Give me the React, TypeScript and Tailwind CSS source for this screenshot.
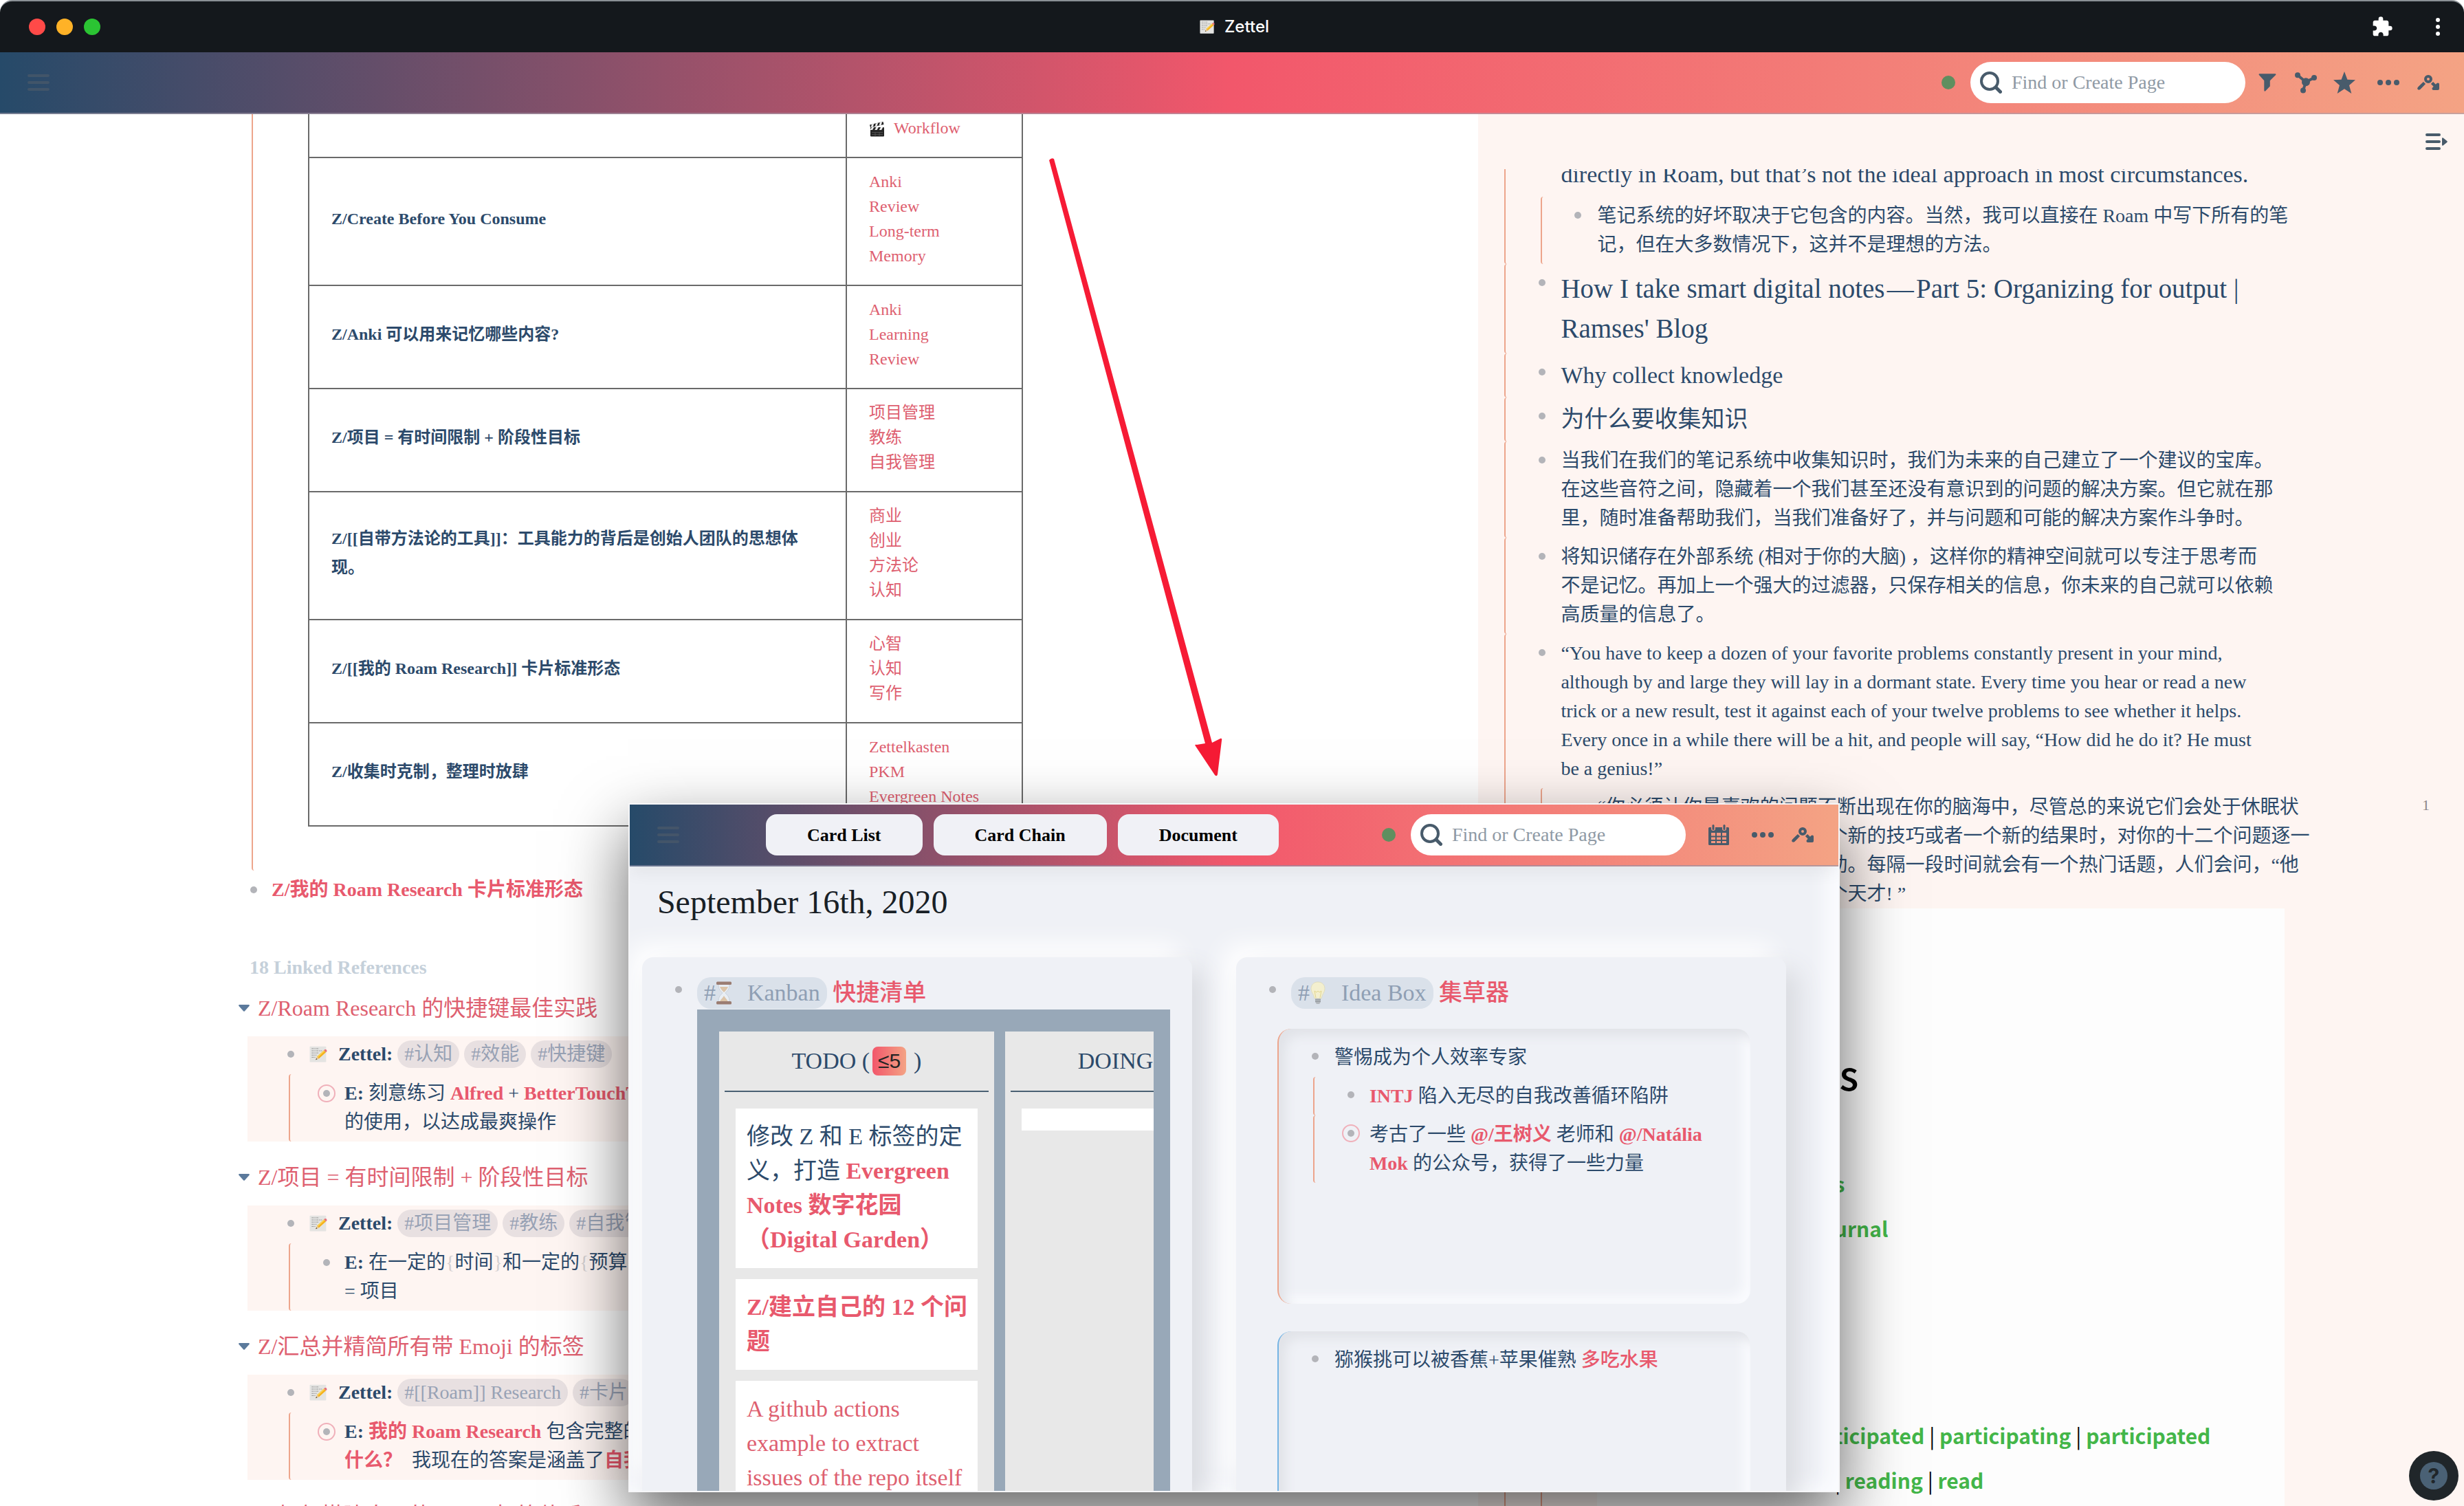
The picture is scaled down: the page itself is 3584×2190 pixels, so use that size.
import React from "react";

const SERIF = "font-['Liberation_Serif','Noto_Sans_CJK_SC',serif]";
const BAR = "bg-[linear-gradient(90deg,#264a69,#f2576b_50%,#f4a384)]";

/* ---------- icons ---------- */

function Memo({ className = "size-6" }: { className?: string }) {
  return (
    <svg viewBox="0 0 24 24" className={`inline-block shrink-0 ${className}`} aria-hidden="true">
      <rect x="0.5" y="1.5" width="22" height="21" rx="0.8" fill="#e4e4e2" />
      <g stroke="#9a9a9a" strokeWidth="0.9" strokeDasharray="3 0.8 1.6 0.7">
        <path d="M3 4.5h10M3 7.4h14M3 10.3h10M3 13.2h7M3 16.1h5" />
      </g>
      <path d="M8.5 19.5l2-4.4L19.6 6.700l2.600 2.800-9.200 8.300z" fill="#f5b21b" />
      <path d="M10.500 15.100L19.600 6.700l1 1.100-9.100 8.400z" fill="#fbd457" />
      <path d="M19.600 6.700l1.200-1.100c1.700-.6 3.200.9 2.600 2.700l-1.200 1.200z" fill="#e5707a" />
      <path d="M8.500 19.500l2-4.400 2.500 2.700z" fill="#e8c89a" />
      <path d="M8.500 19.500l.9-1.900 1.100 1.100z" fill="#333" />
    </svg>
  );
}

function Clapper() {
  return (
    <svg viewBox="0 0 24 24" className="inline-block size-6" aria-hidden="true">
      <path d="M1 5.500L20.500 1l1 4L2 9.300z" fill="#222" />
      <path d="M4 4.800l3.200-.7L5.800 8.400l-3.100.7zM10 3.400l3.200-.7-1.500 4.400-3.100.7zM16 2.100l3.200-.8-1.500 4.500-3.100.7z" fill="#eee" />
      <rect x="2" y="9" width="20" height="13.500" rx="1.200" fill="#252525" />
      <path d="M4 9h3.200L5 13H2v-.6zM10.500 9h3.300l-2.200 4H8.300zM17 9h3.300l-2.200 4h-3.300z" fill="#eee" />
      <path d="M4 16.500h16M4 19.500h16M9 16.500v6M15 16.500v6" stroke="#666" strokeWidth="0.6" />
    </svg>
  );
}

function Hourglass() {
  return (
    <svg viewBox="0 0 24 34" className="inline-block h-[34px] w-6 align-[-6px]" aria-hidden="true">
      <path d="M4 4h16c0 6-1 8-6 13 5 5 6 7 6 13H4c0-6 1-8 6-13C5 12 4 10 4 4z" fill="#e9eef4" stroke="#c3cbd5" strokeWidth="0.8" />
      <path d="M6 8h12c-1 3-3 5-6 8-3-3-5-5-6-8z" fill="#dcc4a8" />
      <path d="M6 30c1-4 4-5 6-9 2 4 5 5 6 9z" fill="#dcc4a8" />
      <rect x="1" y="0.500" width="22" height="4.500" rx="1.500" fill="#9b7d72" />
      <rect x="1" y="29" width="22" height="4.500" rx="1.500" fill="#9b7d72" />
    </svg>
  );
}

function Bulb() {
  return (
    <svg viewBox="0 0 24 34" className="inline-block h-[34px] w-6 align-[-6px]" aria-hidden="true">
      <path d="M12 1C5.500 1 2 5.500 2 11c0 5 4 7.500 5 14h10c1-6.500 5-9 5-14 0-5.500-3.500-10-10-10z" fill="#f3efcf" stroke="#dcd9b8" strokeWidth="0.8" />
      <path d="M9 24l-2-10 3 2 2-2 2 2 3-2-2 10" fill="none" stroke="#e3d68e" strokeWidth="1" />
      <path d="M8 25h8v5l-2 3h-4l-2-3z" fill="#b3b8bd" />
      <path d="M8 27h8M8 29.500h8" stroke="#8d9297" strokeWidth="0.9" />
    </svg>
  );
}

const FilterIcon = () => (
  <svg viewBox="0 0 26 26" className="size-[26px]" fill="#485b6b" aria-hidden="true">
    <path d="M1.300 0.300h23.400q1.400.8.200 2L16.800 10.300v8.200L10 25.500q-1.700.6-1.700-1V10.300L1.100 2.300q-1.200-1.200.2-2z" />
  </svg>
);

const GraphIcon = () => (
  <svg viewBox="0 0 32 31" className="h-[31px] w-8" fill="#485b6b" aria-hidden="true">
    <path d="M4 4.300l12 10L28 8M16 14.300l-4 12" stroke="#485b6b" strokeWidth="4" fill="none" />
    <circle cx="4" cy="4.300" r="4" />
    <circle cx="28" cy="8" r="4" />
    <circle cx="12" cy="26.500" r="4" />
    <circle cx="16" cy="14.300" r="6" />
  </svg>
);

const StarIcon = () => (
  <svg viewBox="0 0 32 32" className="size-8" fill="#485b6b" aria-hidden="true">
    <path d="M16 0l4.400 11.800L32 12.300l-9 7.600L26.300 32 16 25.200 5.700 32 9 19.900 0 12.300l11.600-.5z" />
  </svg>
);

const DotsIcon = () => (
  <svg viewBox="0 0 32 8" className="h-2 w-8" fill="#485b6b" aria-hidden="true">
    <circle cx="4" cy="4" r="4" />
    <circle cx="16" cy="4" r="4" />
    <circle cx="28" cy="4" r="4" />
  </svg>
);

const PathIcon = () => (
  <svg viewBox="0 0 32 22" className="h-[22px] w-8" fill="none" stroke="#485b6b" strokeWidth="4" strokeLinecap="round" aria-hidden="true">
    <circle cx="16" cy="6" r="4" />
    <path d="M2.200 19.800L10.500 11.500M21.500 11.500l7.500 7.500" strokeLinecap="butt" strokeWidth="4.500" />
    <path d="M2.300 19.700l5-5" />
    <path d="M30 13.500v6.500h-6.500z" fill="#485b6b" strokeWidth="4" strokeLinejoin="round" />
  </svg>
);

const CalendarIcon = () => (
  <svg viewBox="0 0 30 30" className="size-[30px]" aria-hidden="true">
    <path d="M1.500 4H4v2a3 3 0 0 0 6 0V4h10v2a3 3 0 0 0 6 0V4h2.500q1.500 0 1.500 1.500v23q0 1.500-1.500 1.500h-27Q0 30 0 28.500v-23Q0 4 1.500 4z" fill="#485b6b" />
    <rect x="5.500" y="0" width="3" height="8" rx="1.500" fill="#485b6b" />
    <rect x="21.500" y="0" width="3" height="8" rx="1.500" fill="#485b6b" />
    <g fill="#f4967f">
      <path d="M4 12h6v4.500H4zM12 12h6v4.500h-6zM20 12h6v4.500h-6zM4 18.500h6V22H4zM12 18.500h6V22h-6zM20 18.500h6V22h-6zM4 24h6v3H4zM12 24h6v3h-6zM20 24h6v3h-6z" />
    </g>
  </svg>
);

const MenuLines = () => (
  <svg viewBox="0 0 32 24" className="h-6 w-8" stroke="#4b5a69" strokeWidth="4" strokeLinecap="round" aria-hidden="true">
    <path d="M2 2h28M2 12h28M2 22h28" />
  </svg>
);

const MenuOpenIcon = () => (
  <svg viewBox="0 0 32 24" className="h-6 w-8" aria-hidden="true">
    <path d="M2 2h18M2 12h18M2 22h18" stroke="#485b6b" strokeWidth="4" strokeLinecap="round" />
    <path d="M24 7.500q0-2 1.700-1l5.500 4.400q1.300 1.100 0 2.200l-5.500 4.400q-1.700 1-1.700-1z" fill="#485b6b" />
  </svg>
);

const SearchIcon = () => (
  <svg viewBox="0 0 32 32" className="size-8 shrink-0" fill="none" stroke="#485b6b" aria-hidden="true">
    <circle cx="14" cy="14" r="12" strokeWidth="4" />
    <path d="M23.500 23.500l6 6" strokeWidth="5" strokeLinecap="round" />
  </svg>
);

const PuzzleIcon = () => (
  <svg viewBox="0 0 24 24" className="size-8" fill="#fff" aria-hidden="true">
    <path d="M20.500 11H19V7c0-1.100-.9-2-2-2h-4V3.500a2.500 2.500 0 0 0-5 0V5H4c-1.100 0-1.990.9-1.990 2v3.800H3.500c1.490 0 2.700 1.210 2.700 2.700s-1.210 2.700-2.700 2.700H2V20c0 1.100.9 2 2 2h3.800v-1.500c0-1.490 1.210-2.700 2.700-2.700 1.490 0 2.700 1.210 2.700 2.700V22H17c1.100 0 2-.9 2-2v-4h1.500a2.500 2.500 0 0 0 0-5z" />
  </svg>
);

/* ---------- shared pieces ---------- */

function IconButton({ label, className = "", children }: { label: string; className?: string; children: React.ReactNode }) {
  return (
    <button type="button" aria-label={label} className={`flex size-8 shrink-0 items-center justify-center ${className}`}>
      {children}
    </button>
  );
}

function Search({ id }: { id: string }) {
  return (
    <div className="flex items-center gap-[22px]">
      <span className="size-5 rounded-full bg-[#5f8f5f]" />
      <label htmlFor={id} className="flex h-[60px] w-[400px] items-center gap-[14px] rounded-full bg-white pl-[14px]">
        <SearchIcon />
        <input
          id={id}
          type="text"
          aria-label="Find or Create Page"
          placeholder="Find or Create Page"
          className="w-full min-w-0 bg-transparent pr-6 text-[28px] leading-[42px] outline-none placeholder:text-[#8f9aa5]"
        />
      </label>
    </div>
  );
}

function Link({ bold, medium, children }: { bold?: boolean; medium?: boolean; children: React.ReactNode }) {
  const tone = bold ? "font-bold text-[#e8596d]" : medium ? "font-medium text-[#e8596d]" : "text-[#de6070]";
  return (
    <a href="#" className={tone}>
      {children}
    </a>
  );
}

function Tag({ children }: { children: React.ReactNode }) {
  return (
    <a href="#" className="inline-block h-10 rounded-full bg-[#e8e0e1] px-[10px] leading-10 whitespace-nowrap text-[#98a2b5]">
      {children}
    </a>
  );
}

function Bullet({ ring, className = "" }: { ring?: boolean; className?: string }) {
  return (
    <span className={`relative size-[10px] shrink-0 rounded-full bg-[#b3b4b9] ${className}`}>
      {ring && <span className="absolute -inset-2 rounded-full border-2 border-[#f0b0ba]" />}
    </span>
  );
}

/* ---------- left page ---------- */

const rows: { title: string; tags: string[] }[] = [
  { title: "Z/Create Before You Consume", tags: ["Anki", "Review", "Long-term", "Memory"] },
  { title: "Z/Anki 可以用来记忆哪些内容?", tags: ["Anki", "Learning", "Review"] },
  { title: "Z/项目 = 有时间限制 + 阶段性目标", tags: ["项目管理", "教练", "自我管理"] },
  { title: "Z/[[自带方法论的工具]]：工具能力的背后是创始人团队的思想体现。", tags: ["商业", "创业", "方法论", "认知"] },
  { title: "Z/[[我的 Roam Research]] 卡片标准形态", tags: ["心智", "认知", "写作"] },
  { title: "Z/收集时克制，整理时放肆", tags: ["Zettelkasten", "PKM", "Evergreen Notes"] },
];

function CardTable() {
  return (
    <table className="w-[1040px] table-fixed border-collapse text-[24px]">
      <colgroup>
        <col className="w-[782px]" />
        <col />
      </colgroup>
      <tbody>
        <tr>
          <td className="border-2 border-t-0 border-[#6a6a6a]" />
          <td className="border-2 border-t-0 border-[#6a6a6a] px-8 pt-0.5 pb-6 leading-9">
            <Clapper /> <span className="pl-1.5"><Link>Workflow</Link></span>
          </td>
        </tr>
        {rows.map((r) => (
          <tr key={r.title}>
            <td className="border-2 border-[#6a6a6a] px-8 align-middle leading-[42px] font-bold">
              <div className="pb-2">{r.title}</div>
            </td>
            <td className="border-2 border-[#6a6a6a] px-8 pt-4 pb-6 leading-9">
              {r.tags.map((t) => (
                <div key={t} className="whitespace-nowrap"><Link>{t}</Link></div>
              ))}
            </td>
          </tr>
        ))}
      </tbody>
    </table>
  );
}

function Reference({ title, tags, ring, children }: { title: string; tags: string[]; ring?: boolean; children: React.ReactNode }) {
  return (
    <section className="mb-7">
      <h3 className="flex items-center gap-3 pl-[347px] text-[32px] leading-[48px]">
        <svg viewBox="0 0 16 10" className="h-[10px] w-4" fill="#5b7a9c" aria-hidden="true">
          <path d="M1 0h14q1.500.6.5 2L9 9.300q-1 1-2 0L.5 2Q-.5.600 1 0z" />
        </svg>
        <Link>{title}</Link>
      </h3>
      <div className="mt-[17px] mr-[90px] ml-[360px] bg-[#fef5f2] pt-[5px] pl-[58px]">
        <div className="flex items-center">
          <Bullet />
          <Memo className="ml-[22px] size-[26px]" />
          <p className="pl-4 leading-[42px] whitespace-nowrap">
            <b>Zettel:</b>{" "}
            {tags.map((t) => (
              <React.Fragment key={t}>
                <Tag>{t}</Tag>{" "}
              </React.Fragment>
            ))}
          </p>
        </div>
        <div className="mt-2 ml-[2px] flex rounded-l-[4px] border-l-2 border-[#eda58c] py-[7px]">
          <Bullet ring={ring} className="mt-4 ml-12" />
          <p className="pl-[21px] leading-[42px] whitespace-nowrap">{children}</p>
        </div>
      </div>
    </section>
  );
}

function LeftPage() {
  return (
    <main className="min-w-0 flex-1 overflow-hidden text-[28px]">
      <div className="ml-[366px] rounded-bl-[4px] border-l-2 border-[#eda58c] pb-16 pl-20">
        <CardTable />
      </div>
      <div className="ml-[364px] flex items-center gap-[21px] py-[7px]">
        <Bullet />
        <p className="leading-[42px]"><Link bold>Z/我的 Roam Research 卡片标准形态</Link></p>
      </div>
      <h2 className="mt-16 mb-[14px] ml-[363px] leading-[42px] font-bold text-[#c5d0da]">18 Linked References</h2>
      <Reference title="Z/Roam Research 的快捷键最佳实践" tags={["#认知", "#效能", "#快捷键"]} ring>
        <b>E:</b> 刻意练习 <Link bold>Alfred</Link> + <Link bold>BetterTouchTool</Link>
        <br />
        的使用，以达成最爽操作
      </Reference>
      <Reference title="Z/项目 = 有时间限制 + 阶段性目标" tags={["#项目管理", "#教练", "#自我管理"]}>
        <b>E:</b> 在一定的<span className="text-[#d3cfd0]">{"{"}</span>时间<span className="text-[#d3cfd0]">{"}"}</span>和一定的
        <span className="text-[#d3cfd0]">{"{"}</span>预算<span className="text-[#d3cfd0]">{"}"}</span>
        <br />= 项目
      </Reference>
      <Reference title="Z/汇总并精简所有带 Emoji 的标签" tags={["#[[Roam]] Research", "#卡片"]} ring>
        <b>E:</b> <Link bold>我的 Roam Research</Link> 包含完整的
        <br />
        <Link bold>什么？</Link>&ensp;我现在的答案是涵盖了<Link bold>自我管理</Link>
      </Reference>
      <Reference title="Z/如何搭建自己的 Roam 标签体系" tags={["#标签"]}>
        <b>E:</b> 标签
      </Reference>
    </main>
  );
}

/* ---------- sidebar ---------- */

function Block({ size = "text-[28px] leading-[42px]", children, nested }: { size?: string; children: React.ReactNode; nested?: React.ReactNode }) {
  return (
    <div className="rounded-l-[4px] border-l-2 border-[#eda58c]">
      <div className="flex py-[7px] pl-12">
        <Bullet className="mt-[15px]" />
        <p className={`w-[1052px] pl-[22px] box-content ${size}`}>{children}</p>
      </div>
      {nested}
    </div>
  );
}

function Sidebar() {
  return (
    <aside className="flex w-2/5 flex-col overflow-hidden bg-[#fef5f2]">
      <div className="flex h-20 shrink-0 items-center justify-end pr-6">
        <IconButton label="Close sidebar"><MenuOpenIcon /></IconButton>
      </div>
      <div className="min-h-0 flex-1 overflow-hidden pl-[38px]">
        <div className="rounded-bl-[4px] border-l-2 border-[#eda58c]">
          <p className="-mt-[17px] mb-[7px] ml-20 text-[34px] leading-[50px] whitespace-nowrap">
            directly in Roam, but that’s not the ideal approach in most circumstances.
          </p>
          <div className="ml-[51px] flex rounded-l-[4px] border-l-2 border-[#eda58c] py-[7px] pl-[47px]">
            <Bullet className="mt-[15px]" />
            <p className="box-content w-[1020px] pl-[23px] text-[28px] leading-[42px]">
              笔记系统的好坏取决于它包含的内容。当然，我可以直接在 Roam 中写下所有的笔记，但在大多数情况下，这并不是理想的方法。
            </p>
          </div>
        </div>
        <Block size="text-[39px] leading-[58px]">
          How I take smart digital notes&#8202;—&#8202;Part 5: Organizing for output |<br />
          Ramses' Blog
        </Block>
        <Block size="text-[34px] leading-[50px]">Why collect knowledge</Block>
        <Block size="text-[34px] leading-[50px]">为什么要收集知识</Block>
        <Block>
          当我们在我们的笔记系统中收集知识时，我们为未来的自己建立了一个建议的宝库。在这些音符之间，隐藏着一个我们甚至还没有意识到的问题的解决方案。但它就在那里，随时准备帮助我们，当我们准备好了，并与问题和可能的解决方案作斗争时。
        </Block>
        <Block>
          将知识储存在外部系统 (相对于你的大脑) ，这样你的精神空间就可以专注于思考而
          <br />
          不是记忆。再加上一个强大的过滤器，只保存相关的信息，你未来的自己就可以依赖
          <br />
          高质量的信息了。
        </Block>
        <Block
          nested={
            <div className="ml-[51px] rounded-l-[4px] border-l-2 border-[#eda58c] pt-[7px] pl-20">
              <div className="flex justify-between pr-[50px]">
                <p className="w-[1052px] text-[28px] leading-[42px]">
                  “你必须让你最喜欢的问题不断出现在你的脑海中，尽管总的来说它们会处于休眠状
                  <br />
                  态。每当你听到或者读到一个新的技巧或者一个新的结果时，对你的十二个问题逐一
                  <br />
                  进行测试，看看它是否有帮助。每隔一段时间就会有一个热门话题，人们会问，“他
                  <br />
                  是怎么做到的？他一定是一个天才! ”
                </p>
                <span className="text-[22px] leading-9 text-[#8c8686]">1</span>
              </div>
              <div className="h-[1000px] w-[1000px] bg-[#fdfdfd] pt-[200px] text-right font-['Noto_Sans_CJK_SC',sans-serif] text-[30px] leading-[65px] font-bold whitespace-nowrap text-[#43b649]">
                <div className="w-[380px] text-[58px] leading-[80px] font-medium text-black">Examples</div>
                <div className="mt-[88px] w-[360px]">Good habits</div>
                <div className="w-[423px]">Bullet journal</div>
                <div className="mt-[236px] w-[892px]">
                  participated <Sep /> participating <Sep /> participated
                </div>
                <div className="w-[562px]">
                  read <Sep /> reading <Sep /> read
                </div>
              </div>
            </div>
          }
        >
          “You have to keep a dozen of your favorite problems constantly present in your mind,
          <br />
          although by and large they will lay in a dormant state. Every time you hear or read a new
          <br />
          trick or a new result, test it against each of your twelve problems to see whether it helps.
          <br />
          Every once in a while there will be a hit, and people will say, “How did he do it? He must
          <br />
          be a genius!”
        </Block>
      </div>
    </aside>
  );
}

const Sep = () => <span className="font-normal text-black">|</span>;

/* ---------- floating window ---------- */

function Panel({ icon, name, title, children }: { icon: React.ReactNode; name: string; title: string; children: React.ReactNode }) {
  return (
    <section className="flex w-[800px] shrink-0 flex-col rounded-t-[16px] bg-[#eff1f6] pt-7 shadow-[18px_18px_36px_#d9dbe0,-18px_-18px_36px_#ffffff]">
      <div className="flex h-12 pl-12 text-[34px]">
        <Bullet className="mt-[14px]" />
        <p className="pl-[22px] leading-[48px]">
          <a href="#" className="inline-block h-[46px] rounded-[20px] bg-[#dae1ea] px-[10px] leading-[46px] text-[#8f9fb4]">
            #{icon}<span className="pl-[22px]">{name}</span>
          </a>{" "}
          <Link medium>{title}</Link>
        </p>
      </div>
      {children}
    </section>
  );
}

function Column({ title, badge, children }: { title: string; badge: string; children?: React.ReactNode }) {
  return (
    <div className="w-[400px] shrink-0 bg-[#e8e8e8] px-2">
      <h3 className="flex h-[88px] items-center justify-center border-b-2 border-[#4a6073] text-[34px] leading-[50px]">
        {title} (
        <span className="mx-1 rounded-lg bg-[linear-gradient(90deg,#f2576b,#f4a384)] px-2 font-['Liberation_Sans',sans-serif] text-[30px] leading-[42px] text-[#242424]">{badge}</span>
        &thinsp;)
      </h3>
      <div className="flex flex-col gap-4 px-4 pt-6">{children}</div>
    </div>
  );
}

function Note({ accent, children }: { accent: string; children: React.ReactNode }) {
  return (
    <div className={`mr-[52px] ml-[60px] h-[400px] shrink-0 rounded-[20px] border-l-2 pt-[14px] text-[28px] leading-[42px] shadow-[inset_10px_10px_16px_#e1e3e8,inset_-10px_-10px_16px_#fafbfe] ${accent}`}>
      {children}
    </div>
  );
}

function FloatingWindow() {
  return (
    <div className="absolute top-[1168px] left-[25.5%] flex h-[1002px] w-[1762px] flex-col overflow-hidden border-2 border-[#f6f6f8] bg-[#eff1f6] shadow-[0_40px_90px_rgba(0,0,0,0.6)]">
      <header className={`relative z-10 flex h-[90px] shrink-0 items-center border-b-2 border-b-[#8e8fa8]/60 pr-9 pl-10 shadow-[0_8px_24px_rgba(0,0,0,0.06)] ${BAR}`}>
        <IconButton label="Menu" className="opacity-70"><MenuLines /></IconButton>
        <nav className="ml-[126px] flex gap-4">
          {["Card List", "Card Chain", "Document"].map((b) => (
            <button key={b} type="button" className="h-[60px] rounded-[16px] bg-[#f0f1f6] px-[60px] text-[26px] font-bold text-black">
              {b}
            </button>
          ))}
        </nav>
        <div className="ml-auto flex items-center">
          <Search id="find-daily" />
          <IconButton label="Calendar" className="ml-8"><CalendarIcon /></IconButton>
          <IconButton label="More" className="ml-8"><DotsIcon /></IconButton>
          <IconButton label="Graph path" className="ml-[26px]"><PathIcon /></IconButton>
        </div>
      </header>
      <div className="flex min-h-0 flex-1 flex-col overflow-hidden pt-[22px] shadow-[inset_-20px_-10px_24px_#fafbfe]">
        <h1 className="mb-[50px] pl-10 text-[48px] leading-[60px] text-[#182026]">September 16th, 2020</h1>
        <div className="flex min-h-0 flex-1 gap-16 pl-[18px]">
          <Panel icon={<Hourglass />} name="Kanban" title="快捷清单">
            <div className="mr-8 ml-20 flex min-h-0 flex-1 bg-[#98a8b8] pt-8 pr-6 pl-8">
              <div className="flex min-w-0 flex-1 gap-4 overflow-hidden">
                <Column title="TODO" badge="≤5">
                  <div className="bg-white py-4 pr-3 pl-4 text-[34px] leading-[50px]">
                    修改 Z 和 E 标签的定义，打造 <Link bold>Evergreen Notes 数字花园<br />（Digital Garden）</Link>
                  </div>
                  <div className="bg-white py-4 pr-3 pl-4 text-[34px] leading-[50px]">
                    <Link bold>Z/建立自己的 12 个问题</Link>
                  </div>
                  <div className="bg-white py-4 pr-3 pl-4 text-[34px] leading-[50px]">
                    <Link>A github actions example to extract issues of the repo itself</Link>
                  </div>
                </Column>
                <Column title="DOING" badge="1">
                  <div className="h-8 bg-white" />
                </Column>
              </div>
            </div>
          </Panel>
          <Panel icon={<Bulb />} name="Idea Box" title="集草器">
            <div className="mt-7 flex flex-col gap-10">
              <Note accent="border-[#eda58c]">
                <div className="flex py-[7px] pl-12">
                  <Bullet className="mt-[14px]" />
                  <p className="pl-[23px]">警惕成为个人效率专家</p>
                </div>
                <div className="ml-[50px] flex rounded-l-[4px] border-l-2 border-[#eda58c] py-[7px] pl-12">
                  <Bullet className="mt-[14px]" />
                  <p className="pl-[22px]"><Link bold>INTJ</Link> 陷入无尽的自我改善循环陷阱</p>
                </div>
                <div className="ml-[50px] flex rounded-l-[4px] border-l-2 border-[#eda58c] py-[7px] pl-12">
                  <Bullet ring className="mt-[14px]" />
                  <p className="pl-[22px]">
                    考古了一些 <Link bold>@/王树义</Link> 老师和 <Link bold>@/Natália<br />Mok</Link> 的公众号，获得了一些力量
                  </p>
                </div>
              </Note>
              <Note accent="border-[#74b4e4]">
                <div className="flex py-[7px] pl-12">
                  <Bullet className="mt-[14px]" />
                  <p className="pl-[23px]">猕猴挑可以被香蕉+苹果催熟 <Link medium>多吃水果</Link></p>
                </div>
              </Note>
            </div>
          </Panel>
        </div>
      </div>
    </div>
  );
}

/* ---------- page ---------- */

export default function App() {
  return (
    <div lang="zh-CN" className={`relative flex h-screen flex-col overflow-hidden bg-white text-[#2c4a6b] ${SERIF}`}>
      <div className="relative flex h-[76px] shrink-0 items-center rounded-t-[18px] border-t-2 border-[#8a9095] bg-[#14181c]">
        <div className="flex flex-1 gap-4 pl-[42px]">
          <button type="button" aria-label="Close" className="size-6 rounded-full bg-[#ff4a48]" />
          <button type="button" aria-label="Minimize" className="size-6 rounded-full bg-[#ffb227]" />
          <button type="button" aria-label="Zoom" className="size-6 rounded-full bg-[#2bc433]" />
        </div>
        <div className="flex items-center gap-[14px] font-['Inter',sans-serif] text-[24px] leading-8 font-medium text-white">
          <Memo className="size-[22px]" />
          Zettel
        </div>
        <div className="flex flex-1 items-center justify-end gap-[62px] pr-[35px]">
          <button type="button" aria-label="Extensions"><PuzzleIcon /></button>
          <button type="button" aria-label="Options" className="flex flex-col gap-1">
            <span className="size-1.5 rounded-full bg-white" />
            <span className="size-1.5 rounded-full bg-white" />
            <span className="size-1.5 rounded-full bg-white" />
          </button>
        </div>
      </div>
      <header className={`flex h-[90px] shrink-0 items-center border-b-2 border-b-[#a9a0ae]/60 pr-9 pl-10 ${BAR}`}>
        <IconButton label="Menu" className="opacity-70"><MenuLines /></IconButton>
        <div className="ml-auto flex items-center gap-6">
          <Search id="find-main" />
          <IconButton label="Filter" className="-ml-2"><FilterIcon /></IconButton>
          <IconButton label="Graph"><GraphIcon /></IconButton>
          <IconButton label="Favorite"><StarIcon /></IconButton>
          <IconButton label="More" className="ml-2"><DotsIcon /></IconButton>
          <IconButton label="Graph path" className="ml-0.5"><PathIcon /></IconButton>
        </div>
      </header>
      <div className="flex min-h-0 flex-1">
        <LeftPage />
        <Sidebar />
      </div>
      <svg viewBox="0 0 256 904" className="absolute top-[228px] left-[1524px] h-[904px] w-64" fill="#f61b35" aria-hidden="true">
        <path d="M2 5q3-4 7-2l230 849 12-6q3-1 2 3l-6 49q-1 4-4 1l-28-42q-2-3 2-2l12-2z" />
      </svg>
      <FloatingWindow />
      <button type="button" aria-label="Help" className="absolute right-2 bottom-2 flex size-[72px] items-center justify-center rounded-full bg-[#20262a]">
        <span className="flex size-10 items-center justify-center rounded-full bg-[#4a6175] font-['Inter',sans-serif] text-[30px] leading-10 font-bold text-[#20262a]">?</span>
      </button>
    </div>
  );
}
